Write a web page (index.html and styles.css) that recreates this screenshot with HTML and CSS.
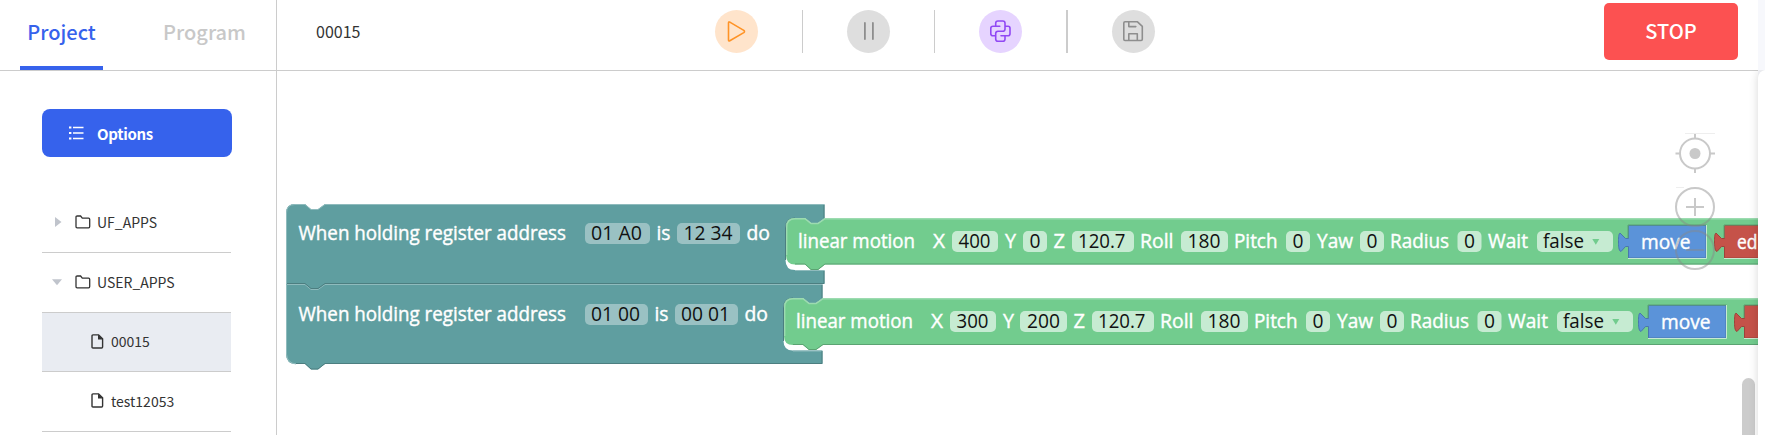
FILE: index.html
```html
<!DOCTYPE html>
<html lang="en">
<head>
<meta charset="utf-8">
<title>Blockly project</title>
<link rel="stylesheet" href="styles.css">
</head>
<body>
<div class="app">
  <aside class="sidebar">
    <nav class="tabs">
      <a class="tab tab-active">Project</a>
      <a class="tab tab-second">Program</a>
    </nav>
    <div class="side-body">
      <button class="options">
        <svg class="list-icon" viewBox="0 0 15 14"><path d="M4 1.5H14.5M4 7H14.5M4 12.5H14.5" stroke="#fff" stroke-width="1.3"/><path d="M0 1.5H2.4M0 7H2.4M0 12.5H2.4" stroke="#fff" stroke-width="1.8"/></svg>
        <span class="options-text">Options</span>
      </button>
      <ul class="tree">
        <li class="row"><svg class="caret" viewBox="0 0 10 10"><path d="M3 0L9.5 5L3 10Z"/></svg><svg class="folder" viewBox="0 0 16 14"><path d="M1 2.2Q1 1 2.2 1H5.6L7.3 3.1H13.6Q14.7 3.1 14.7 4.2V11.6Q14.7 12.8 13.6 12.8H2.2Q1 12.8 1 11.6Z"/></svg><span>UF_APPS</span></li>
        <li class="row"><svg class="caret" viewBox="0 0 10 10"><path d="M0 2.2H10L5 8.2Z"/></svg><svg class="folder" viewBox="0 0 16 14"><path d="M1 2.2Q1 1 2.2 1H5.6L7.3 3.1H13.6Q14.7 3.1 14.7 4.2V11.6Q14.7 12.8 13.6 12.8H2.2Q1 12.8 1 11.6Z"/></svg><span>USER_APPS</span></li>
        <li class="row row-file row-selected"><svg class="file" viewBox="0 0 13 15"><path class="page" d="M2 .9H7.6L11.6 4.9V13Q11.6 14 10.6 14H2Q1 14 1 13V1.9Q1 .9 2 .9Z"/><path class="fold" d="M7 .8L12 5.4H7Z"/></svg><span>00015</span></li>
        <li class="row row-file"><svg class="file" viewBox="0 0 13 15"><path class="page" d="M2 .9H7.6L11.6 4.9V13Q11.6 14 10.6 14H2Q1 14 1 13V1.9Q1 .9 2 .9Z"/><path class="fold" d="M7 .8L12 5.4H7Z"/></svg><span>test12053</span></li>
      </ul>
    </div>
  </aside>

  <main class="main">
    <header class="toolbar">
      <span class="file-name">00015</span>
      <div class="tools">
        <span class="tool tool-run"><svg viewBox="0 0 43 43"><path d="M13.5 13V30Q13.5 31.4 14.8 30.8L28.8 22.6Q30.2 21.5 28.8 20.4L14.8 12.1Q13.5 11.5 13.5 13Z"/></svg></span>
        <span class="sep"></span>
        <span class="tool tool-off"><svg viewBox="0 0 43 43"><path d="M17.9 13V29M25.9 13V29" stroke-width="1.8"/></svg></span>
        <span class="sep"></span>
        <span class="tool tool-python"><svg viewBox="0 0 43 43"><path d="M20.8 16.2H14Q11.8 16.2 11.8 18.2V23.8Q11.8 25.8 14 25.8H16.7V23.6Q16.7 21.3 19 21.3H23.6Q26 21.3 26 19V13.2Q26 11 23.8 11H19Q16.7 11 16.7 13.2V16.2M26 16.2H29Q31 16.2 31 18.2V23.8Q31 25.8 29 25.8H22M16.7 25.8V29Q16.7 31.3 19 31.3H23.8Q26 31.3 26 29V25.8"/></svg></span>
        <span class="sep sep-wide"></span>
        <span class="tool tool-off"><svg viewBox="0 0 43 43"><path d="M13 11.8H25.5L30.3 16.4V29.3Q30.3 30.5 29.1 30.5H13Q11.8 30.5 11.8 29.3V13Q11.8 11.8 13 11.8ZM16.8 12V16.6H23.8M16.8 30V23.8H25.3V30"/></svg></span>
      </div>
      <button class="stop">STOP</button>
    </header>

    <div class="workspace">
      <svg class="canvas" viewBox="277 71 1481 364">
        <defs>
          <g id="tail">
            <text class="label" x="0" y="0" textLength="33.5" lengthAdjust="spacingAndGlyphs">Roll</text>
            <rect class="pill" x="41" y="-17" width="47" height="21" rx="5"/><text class="value" x="47.5" y="0" textLength="33" lengthAdjust="spacingAndGlyphs">180</text>
            <text class="label" x="94" y="0" textLength="43.5" lengthAdjust="spacingAndGlyphs">Pitch</text>
            <rect class="pill" x="146" y="-17" width="24" height="21" rx="5"/><text class="value" x="152.5" y="0" textLength="11" lengthAdjust="spacingAndGlyphs">0</text>
            <text class="label" x="177" y="0" textLength="36" lengthAdjust="spacingAndGlyphs">Yaw</text>
            <rect class="pill" x="220" y="-17" width="24" height="21" rx="5"/><text class="value" x="226.5" y="0" textLength="11" lengthAdjust="spacingAndGlyphs">0</text>
            <text class="label" x="250" y="0" textLength="59" lengthAdjust="spacingAndGlyphs">Radius</text>
            <rect class="pill" x="317.5" y="-17" width="24" height="21" rx="5"/><text class="value" x="324" y="0" textLength="11" lengthAdjust="spacingAndGlyphs">0</text>
            <text class="label" x="348" y="0" textLength="40" lengthAdjust="spacingAndGlyphs">Wait</text>
            <rect class="pill" x="397" y="-17" width="76" height="21" rx="5"/><text class="value" x="403" y="0" textLength="41" lengthAdjust="spacingAndGlyphs">false</text>
            <path class="arrow" d="M452.3 -9H459.3L455.8 -3.2Z"/>
            <path class="blue" d="M488.5 -22.5H566V10H488.5V-1.5H485.5L481 3.5C478.5 3 478.5 -3 478.5 -6C478.5 -9 478.5 -14.5 480 -15L485.5 -9.5H488.5Z"/>
            <path class="socket-dark" d="M488 -10V-23H566.5"/><path class="socket-light" d="M488 10.5H566.5V-23"/>
            <text class="label" x="501" y="1" textLength="49.5" lengthAdjust="spacingAndGlyphs">move</text>
            <path class="red" d="M584.5 -22.5H662V10H584.5V-1.5H581.5L577 3.5C574.5 3 574.5 -3 574.5 -6C574.5 -9 574.5 -14.5 576 -15L581.5 -9.5H584.5Z"/>
            <path class="socket-dark" d="M584 -10V-23H662"/><path class="socket-light" d="M584 10.5H662"/>
          </g>
        </defs>

        <path class="teal" d="M286 284V213Q286 204 295 204H305L311 209.3H318L325 204H824.5V218H825L818 223H811L805 218H795Q785.5 218 785.5 228V260Q785.5 270 795 270H824.5V284Z"/>
        <path class="teal" d="M286 284H822.5V298H823L816 303H809L803 298H793Q783.5 298 783.5 308V341Q783.5 350.5 793 350.5H822.5V364H325L318 369.5H311L305 364H296Q286 364 286 354Z"/>
        <path class="teal-light" d="M286.5 284V213Q286.5 204.5 295 204.5H305L311 209.5H318L325 204.5H824M795 270.5H824M286.5 354V284.5H305L311 289.5H318L325 284.5H822M793 351H822M286.5 354Q287 363 296 364"/>
        <path class="teal-dark" d="M824 205V218M785.5 260V228Q785.5 218 795 218M824 271V283.5H325L318 288.5H311L305 283.5H287M822 285V298M783.5 341V308Q783.5 298 793 298M822 351V363.5H325L318 369H311L305 363.5H296"/>

        <path class="green" d="M1760 218H825L818 223H811L805 218H795Q786 218 786 227V255Q786 264.5 795 264.5H805L811 270H818L825 264.5H1760Z"/>
        <path class="green-light" d="M1760 218.7H825L818 223.5H811L805 218.7H795Q786.7 218.7 786.7 227V255"/>
        <path class="green-dark" d="M1760 264H825L818 269.5H811L805 264H795"/>
        <path class="green" d="M1760 298H823L816 303H809L803 298H793Q784 298 784 307V336Q784 345 793 345H803L809 350H816L823 345H1760Z"/>
        <path class="green-light" d="M1760 298.7H823L816 303.5H809L803 298.7H793Q784.7 298.7 784.7 307V336"/>
        <path class="green-dark" d="M1760 344.5H823L816 349.5H809L803 344.5H793"/>

        <text class="label" x="298.5" y="240" textLength="267.5" lengthAdjust="spacingAndGlyphs">When holding register address</text>
        <rect class="pill pill-teal" x="585" y="223" width="65" height="21" rx="5"/><text class="value" x="591" y="240" textLength="51" lengthAdjust="spacingAndGlyphs">01 A0</text>
        <text class="label" x="656.5" y="240" textLength="14" lengthAdjust="spacingAndGlyphs">is</text>
        <rect class="pill pill-teal" x="677" y="223" width="63" height="21" rx="5"/><text class="value" x="683.5" y="240" textLength="49" lengthAdjust="spacingAndGlyphs">12 34</text>
        <text class="label" x="746.5" y="240" textLength="23.5" lengthAdjust="spacingAndGlyphs">do</text>

        <text class="label" x="298.5" y="321" textLength="267.5" lengthAdjust="spacingAndGlyphs">When holding register address</text>
        <rect class="pill pill-teal" x="585" y="304" width="63" height="21" rx="5"/><text class="value" x="591" y="321" textLength="49" lengthAdjust="spacingAndGlyphs">01 00</text>
        <text class="label" x="654.5" y="321" textLength="14" lengthAdjust="spacingAndGlyphs">is</text>
        <rect class="pill pill-teal" x="675" y="304" width="63" height="21" rx="5"/><text class="value" x="681" y="321" textLength="49" lengthAdjust="spacingAndGlyphs">00 01</text>
        <text class="label" x="744.5" y="321" textLength="23.5" lengthAdjust="spacingAndGlyphs">do</text>

        <text class="label" x="798" y="248" textLength="117" lengthAdjust="spacingAndGlyphs">linear motion</text>
        <text class="label" x="933" y="248" textLength="12" lengthAdjust="spacingAndGlyphs">X</text>
        <rect class="pill" x="952" y="231" width="46" height="21" rx="5"/><text class="value" x="958.5" y="248" textLength="32" lengthAdjust="spacingAndGlyphs">400</text>
        <text class="label" x="1005" y="248" textLength="11" lengthAdjust="spacingAndGlyphs">Y</text>
        <rect class="pill" x="1023" y="231" width="24" height="21" rx="5"/><text class="value" x="1029.5" y="248" textLength="11" lengthAdjust="spacingAndGlyphs">0</text>
        <text class="label" x="1053.5" y="248" textLength="11.5" lengthAdjust="spacingAndGlyphs">Z</text>
        <rect class="pill" x="1072" y="231" width="62" height="21" rx="5"/><text class="value" x="1078" y="248" textLength="47.5" lengthAdjust="spacingAndGlyphs">120.7</text>
        <use href="#tail" x="1140" y="248"/>
        <text class="label" x="1737" y="249" textLength="20.5" lengthAdjust="spacingAndGlyphs">ed</text>

        <text class="label" x="796" y="328" textLength="117" lengthAdjust="spacingAndGlyphs">linear motion</text>
        <text class="label" x="931" y="328" textLength="12" lengthAdjust="spacingAndGlyphs">X</text>
        <rect class="pill" x="950" y="311" width="46" height="21" rx="5"/><text class="value" x="956.5" y="328" textLength="32" lengthAdjust="spacingAndGlyphs">300</text>
        <text class="label" x="1003" y="328" textLength="11" lengthAdjust="spacingAndGlyphs">Y</text>
        <rect class="pill" x="1020" y="311" width="47" height="21" rx="5"/><text class="value" x="1027" y="328" textLength="33" lengthAdjust="spacingAndGlyphs">200</text>
        <text class="label" x="1073.5" y="328" textLength="11.5" lengthAdjust="spacingAndGlyphs">Z</text>
        <rect class="pill" x="1092" y="311" width="62" height="21" rx="5"/><text class="value" x="1098" y="328" textLength="47.5" lengthAdjust="spacingAndGlyphs">120.7</text>
        <use href="#tail" x="1160" y="328"/>

        <g class="zoom">
          <circle cx="1695" cy="153.5" r="15"/><circle class="dot" cx="1695" cy="153.5" r="5.5"/>
          <path d="M1695 134V139M1695 168V173M1675.5 153.5H1680M1710 153.5H1715"/>
          <circle cx="1695" cy="207" r="19"/><path d="M1686 207H1704M1695 198V216"/>
          <circle cx="1695" cy="250" r="19"/><path d="M1686 250H1704"/>
        </g>
        <path class="hairline" d="M1685 133.5H1715M1676 187.5H1684"/>
        <rect class="scroll" x="1742" y="378" width="13" height="80" rx="6.5"/>
      </svg>
    </div>
  </main>

  <aside class="edge"><div class="edge-panel"></div></aside>
</div>
</body>
</html>
```
FILE: styles.css
```css
* { box-sizing: border-box; }
body { margin: 0; font-family: "Noto Sans CJK SC", "Noto Sans", sans-serif; background: #fff; color: #333; }
.app { display: flex; width: 1765px; height: 435px; overflow: hidden; }

.sidebar { width: 277px; flex: none; border-right: 1px solid #ccc; }
.tabs { display: flex; height: 71px; padding-left: 20px; border-bottom: 1px solid #ccc; }
.tab { height: 70px; line-height: 64px; font-size: 20px; font-weight: 500; text-align: center; color: #c8c8c8; width: 83px; }
.tab-active { color: #3662ec; border-bottom: 4px solid #3662ec; }
.tab-second { margin-left: 60px; }
.side-body { padding: 38px 0 0 42px; }
.options { display: flex; align-items: center; gap: 13px; width: 190px; height: 48px; padding: 0 0 0 27px; border: 0; border-radius: 8px; background: #3662ec; color: #fff; font: 700 15px "Noto Sans CJK SC", sans-serif; }
.options-text { letter-spacing: -.3px; }
.list-icon { width: 15px; height: 14px; }
.tree { list-style: none; width: 189px; margin: 36px 0 0; padding: 0; }
.row { display: flex; align-items: center; height: 60px; padding: 0 0 2px 10px; border-bottom: 1px solid #ccc; font-size: 14px; white-space: nowrap; }
.row-file { padding-left: 49px; }
.row-selected { height: 59px; background: #e9ecf2; }
.caret { width: 10px; height: 10px; fill: #c0c4cc; margin-right: 13px; }
.folder { width: 16px; height: 14px; fill: none; stroke: #333; stroke-width: 1.3; margin-right: 6px; }
.file { width: 13px; height: 15px; margin-right: 7px; }
.page { fill: none; stroke: #333; stroke-width: 1.4; }
.fold { fill: #333; }

.main { width: 1481px; flex: none; }
.toolbar { display: flex; align-items: flex-start; height: 71px; border-bottom: 1px solid #ccc; }
.file-name { width: 399px; padding-left: 39px; font-size: 16px; line-height: 63px; }
.tools { display: flex; align-items: center; gap: 44px; width: 440px; margin: 10px 0 0 39px; }
.tool { width: 43px; height: 43px; flex: none; border-radius: 50%; }
.tool svg { display: block; fill: none; stroke-width: 1.6; stroke: currentColor; stroke-linecap: round; stroke-linejoin: round; }
.tool-run { background: #ffe4cb; color: #ff9326; }
.tool-off { background: #dedede; color: #8e8e8e; }
.tool-python { background: #e6d4ff; color: #9148f4; }
.sep { width: 1px; height: 43px; flex: none; background: #ccc; }
.sep-wide { width: 2px; }
.stop { width: 134px; height: 57px; margin: 3px 20px 0 auto; padding: 0 0 2px; border: 0; border-radius: 5px; background: #fc5151; color: #fff; font: 500 20px "Noto Sans CJK SC", sans-serif; }

.workspace { height: 364px; }
.canvas { display: block; width: 1481px; height: 364px; }
.canvas text { font-family: "Open Sans", "Noto Sans", sans-serif; font-size: 19.2px; }
.label { fill: #fff; stroke: #fff; stroke-width: .4; }
.value { fill: #111; }
.pill { fill: #fff; fill-opacity: .6; }
.pill-teal { fill-opacity: .37; }
.teal { fill: #5f9ea0; }
.teal-light, .teal-dark, .green-light, .green-dark, .socket-dark, .socket-light { fill: none; }
.teal-light { stroke: #8fbbbd; }
.teal-dark { stroke: #4c7e80; }
.green { fill: #72cc8e; }
.green-light { stroke: #9cdbb0; stroke-width: 1.4; }
.green-dark { stroke: #5ba372; }
.blue { fill: #5b93d9; stroke: #4976ae; }
.red { fill: #c55249; stroke: #9e423a; }
.socket-dark { stroke: #5ba372; }
.socket-light { stroke: #c7ead2; }
.arrow { fill: #72cc8e; }
.zoom { fill: none; stroke: #888; stroke-width: 2; opacity: .45; }
.zoom .dot { fill: #888; stroke: none; }
.hairline { fill: none; stroke: #eee; }
.scroll { fill: #ccc; }

.edge { width: 7px; flex: none; padding-top: 70px; background: #f7f8fc; }
.edge-panel { width: 30px; height: 380px; border-radius: 8px 0 0; background: #fff; box-shadow: 0 0 10px rgba(0, 0, 0, .16); clip-path: inset(0 0 0 -12px); }
```
